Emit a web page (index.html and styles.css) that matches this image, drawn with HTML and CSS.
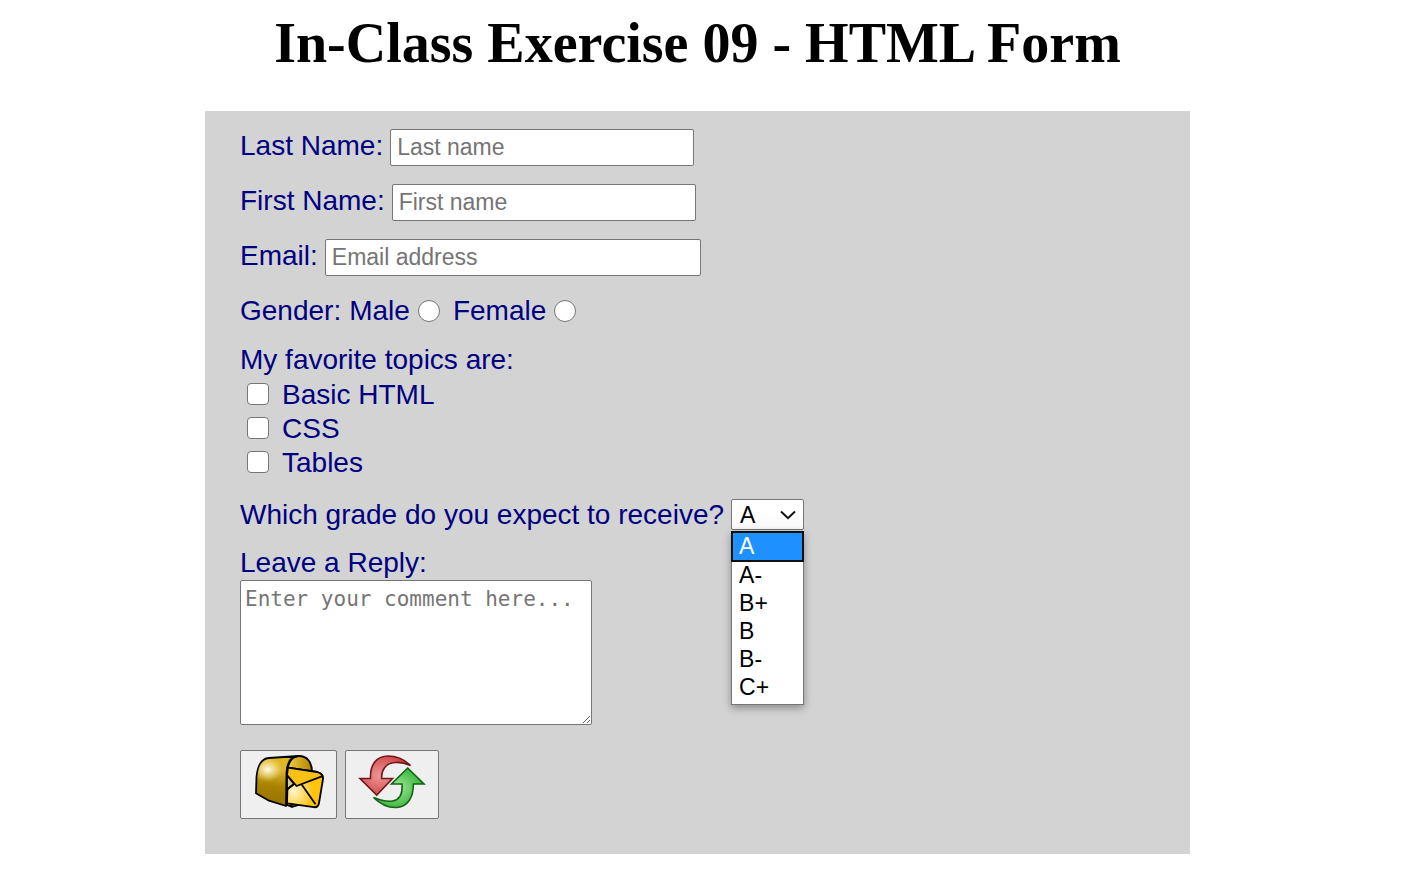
FILE: index.html
```html
<!DOCTYPE html>
<html lang="en">
<head>
<meta charset="utf-8">
<title>In-Class Exercise 09 - HTML Form</title>
<link rel="stylesheet" href="styles.css">
</head>
<body>
<h1 class="title">In-Class Exercise 09 - HTML Form</h1>
<form class="form">
  <div class="row field">
    <label for="last">Last Name:</label>
    <input class="text" id="last" type="text" placeholder="Last name">
  </div>
  <div class="row field">
    <label for="first">First Name:</label>
    <input class="text" id="first" type="text" placeholder="First name">
  </div>
  <div class="row field">
    <label for="email">Email:</label>
    <input class="text wide" id="email" type="email" placeholder="Email address">
  </div>
  <div class="row gender">
    <span>Gender:</span>
    <label for="male">Male</label>
    <input class="radio" id="male" type="radio" name="gender">
    <label for="female">Female</label>
    <input class="radio" id="female" type="radio" name="gender">
  </div>
  <div class="topics">
    <p class="caption">My favorite topics are:</p>
    <div class="topic"><input class="check" id="html" type="checkbox"><label for="html">Basic HTML</label></div>
    <div class="topic"><input class="check" id="css" type="checkbox"><label for="css">CSS</label></div>
    <div class="topic"><input class="check" id="tables" type="checkbox"><label for="tables">Tables</label></div>
  </div>
  <div class="row grade">
    <label for="grade">Which grade do you expect to receive?</label>
    <div class="picker">
      <select class="select" id="grade">
        <option>A</option><option>A-</option><option>B+</option><option>B</option><option>B-</option><option>C+</option>
      </select>
      <svg class="chevron" viewBox="0 0 16 10" aria-hidden="true"><path d="M1 1.5 8 8.2 15 1.5" fill="none" stroke="#111" stroke-width="2"/></svg>
      <ul class="menu" role="listbox" aria-label="Grade">
        <li class="option selected" role="option" aria-selected="true">A</li>
        <li class="option" role="option">A-</li>
        <li class="option" role="option">B+</li>
        <li class="option" role="option">B</li>
        <li class="option" role="option">B-</li>
        <li class="option" role="option">C+</li>
      </ul>
    </div>
  </div>
  <div class="reply">
    <label for="reply">Leave a Reply:</label>
    <textarea class="comment" id="reply" placeholder="Enter your comment here..."></textarea>
  </div>
  <div class="row actions">
    <button class="button send" type="submit" aria-label="Send">
      <svg class="icon" viewBox="0 0 70 54">
        <defs>
          <linearGradient id="side" x1=".3" y1="0" x2=".2" y2="1"><stop offset="0" stop-color="#e3b81c"/><stop offset=".25" stop-color="#dcb52f"/><stop offset=".58" stop-color="#a98200"/><stop offset="1" stop-color="#957000"/></linearGradient>
          <radialGradient id="shine" cx=".3" cy=".42" r=".4"><stop offset="0" stop-color="#fffbe8"/><stop offset="1" stop-color="#fff3b0" stop-opacity="0"/></radialGradient>
          <linearGradient id="inner" x1="0" y1="0" x2="1" y2="0"><stop offset="0" stop-color="#f3cf45"/><stop offset="1" stop-color="#b08200"/></linearGradient>
          <radialGradient id="letter" cx=".2" cy=".6" r=".55"><stop offset="0" stop-color="#fff3cb"/><stop offset="1" stop-color="#fec30a"/></radialGradient>
        </defs>
        <g stroke="#000" stroke-width="1.8" stroke-linejoin="round">
          <path fill="url(#inner)" d="M33 50V18C34 8 38 1 45 1c8 0 13 6 13 16v29l-20 6z"/>
          <path fill="url(#side)" d="M2 38.300 2.500 22C3.500 12 7 3.500 15 3L45 1C37 1 33 8 32.500 18L32 51 15 45.700z"/>
          <path fill="url(#shine)" stroke="none" d="M3 28V22C4 12 7 4 15 4l24-2c-4 3-7 8-7 16v14z"/>
          <path fill="url(#letter)" d="M34 12.700 63 17c4 1 6.500 3 6 7l-4 24c-.5 3-2 4.500-5 4.200L33 48.300z"/>
          <path fill="#d8c990" d="M33 20l7 9-7 5.500z"/>
          <path fill="#f9c016" d="M34 12.700 63 17c3 1 5 2.500 5.500 4.200L42.500 31 33 20z"/>
          <path fill="none" d="M33 34.500l7-5.500M47.500 29.300l14 20M36 50.500l4-1"/>
        </g>
      </svg>
    </button>
    <button class="button reset" type="reset" aria-label="Reset">
      <svg class="icon" viewBox="0 0 70 54">
        <defs>
          <radialGradient id="red" cx=".4" cy=".5" r=".65"><stop offset="0" stop-color="#ef9696"/><stop offset="1" stop-color="#c83c3e"/></radialGradient>
          <radialGradient id="green" cx=".45" cy=".5" r=".65"><stop offset="0" stop-color="#a2e99b"/><stop offset="1" stop-color="#22ab25"/></radialGradient>
        </defs>
        <g stroke-width="1.600" stroke-linejoin="miter">
          <path fill="url(#red)" stroke="#73191b" d="M53.500 10.500C47 4 40 1 31 1 19 1 13 10 13.500 23.500H3l16.700 16.500L35.500 23.500H24.700C24 15 29 8 38 7.500c6-.5 11 1 15.500 3z"/>
          <path fill="url(#green)" stroke="#136319" d="M16.500 42.500C23 49 31 53 40 52.500 51 51.500 56.500 42 56.300 29H67L50.700 13 34.500 29H45c.7 9-1 16-9.500 17-7 1-13-1-19-3.500z"/>
        </g>
      </svg>
    </button>
  </div>
</form>
</body>
</html>
```
FILE: styles.css
```css
* { box-sizing: border-box; }
body {
  margin: 0;
  padding: 11px 18px 0 0;
  background: #fff;
}
.title {
  margin: 0 0 36px;
  text-align: center;
  font: bold 56px/64px "Liberation Serif", "Times New Roman", serif;
  color: #000;
}
.form {
  display: flex;
  flex-direction: column;
  gap: 18px;
  max-width: 985px;
  margin: 0 auto;
  padding: 18px 35px 35px;
  background: #d3d3d3;
  color: #000080;
  font: 28px/34px "Liberation Sans", Arial, sans-serif;
}
.row { display: flex; gap: 7px; align-items: center; }
.field label { padding-bottom: 3px; }
.text {
  width: 304px;
  height: 37px;
  padding: 2px 6px;
  border: 1px solid #767676;
  border-radius: 2px;
  background: #fff;
  font: 23px "Liberation Sans", Arial, sans-serif;
}
.wide { width: 376px; }
.text::placeholder, .comment::placeholder { color: #757575; }
.gender { height: 34px; gap: 8px; }
.radio, .check {
  appearance: none;
  flex: none;
  width: 22px;
  height: 22px;
  margin: 0;
  border: 1px solid #767676;
  background: #fff;
}
.radio { border-radius: 50%; }
.radio + label { margin-left: 5px; }
.check { border-radius: 4px; }
.topics { margin-top: -3px; }
.caption { margin: 0; }
.topic { display: flex; align-items: center; gap: 13px; padding-left: 7px; }
.topic label { padding-top: 2px; line-height: 32px; }
.grade { height: 31px; margin-top: 2px; }
.picker { position: relative; width: 73px; height: 31px; }
.select {
  appearance: none;
  display: block;
  width: 100%;
  height: 100%;
  padding: 0 8px;
  border: 1px solid #767676;
  border-radius: 2px;
  background: linear-gradient(#fff 50%, #f7f7f7);
  color: #000;
  font: 23px "Liberation Sans", Arial, sans-serif;
}
.chevron { position: absolute; right: 8px; top: 11px; width: 16px; height: 10px; pointer-events: none; }
.menu {
  position: absolute;
  z-index: 1;
  top: 32px;
  left: 0;
  width: 100%;
  margin: 0;
  padding: 0 0 3px;
  border: 1px solid #767676;
  background: #fff;
  box-shadow: 0 3px 8px rgba(0, 0, 0, .35);
  list-style: none;
  color: #000;
  font: 23px/28px "Liberation Sans", Arial, sans-serif;
}
.option { padding-left: 7px; }
.selected { height: 29px; background: #1e90ff; color: #fff; outline: 2px solid #101010; outline-offset: -1px; }
.reply { display: flex; flex-direction: column; align-items: flex-start; margin-top: -2px; }
.comment {
  width: 352px;
  height: 145px;
  padding: 4px;
  border: 1px solid #767676;
  border-radius: 2px;
  background: #fff;
  font: 21px/28px "DejaVu Sans Mono", monospace;
}
.actions { margin-top: 7px; gap: 8px; }
.button {
  display: flex;
  justify-content: center;
  height: 69px;
  padding: 4px 0 0;
  border: 1px solid #767676;
  border-radius: 2px;
  background: #efefef;
}
.send { width: 97px; }
.reset { width: 94px; }
.icon { width: 70px; height: 54px; }
```
